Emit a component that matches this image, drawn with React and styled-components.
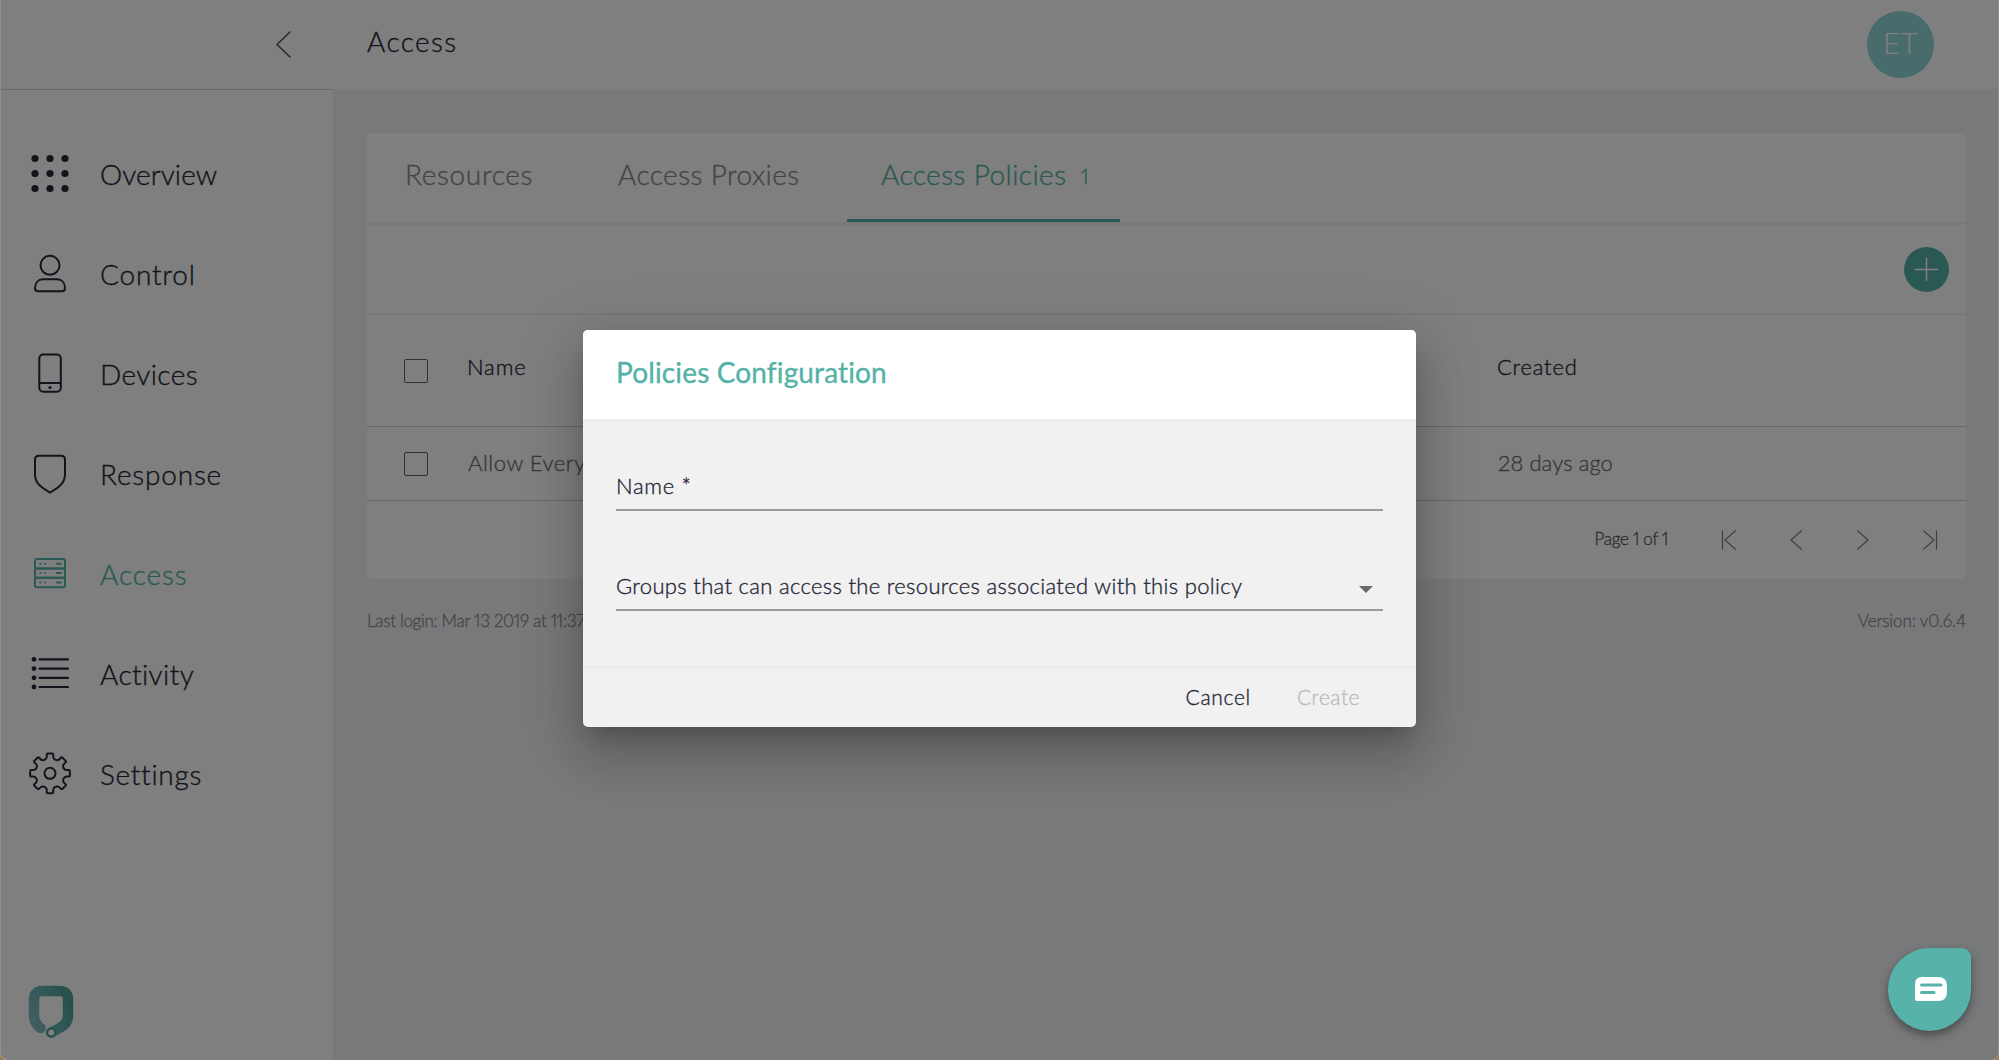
import React from "react";
import styled, { createGlobalStyle } from "styled-components";

const TEAL = "#54b2a6";
const INK = "#262837";

const Global = createGlobalStyle`
  * { box-sizing: border-box; }
  html, body { margin: 0; background: #fff; }
  body { font-family: Lato, "Open Sans", sans-serif; font-weight: 300; color: ${INK}; overflow: hidden; }
`;

const T = styled.span`
  display: block;
  white-space: nowrap;
  font-size: ${(p) => p.$size}px;
  line-height: ${(p) => p.$size + 6}px;
  letter-spacing: ${(p) => p.$ls || 0}px;
  font-weight: ${(p) => p.$weight || 300};
  font-variant-numeric: proportional-nums;
  font-variant-ligatures: none;
  -webkit-text-stroke: ${(p) => p.$stroke ?? 0.35}px currentColor;
  color: ${(p) => p.$color || INK};
`;

const Desktop = styled.div`
  width: 1999px;
  height: 1061px;
  background: #fff;
`;
const Wallpaper = styled.div`
  position: relative;
  height: 1060px;
  background: #9a7b52;
`;
const Page = styled.div`
  display: grid;
  grid-template-columns: 332px 1fr;
  height: 1060px;
  background: #f0f2f5;
  border-left: 1px solid #fff;
  border-right: 1px solid #fff;
  border-radius: 0 0 8px 8px;
  overflow: hidden;
`;
const Sidebar = styled.aside`
  display: flex;
  flex-direction: column;
  background: #fff;
`;
const SidebarTop = styled.div`
  display: flex;
  align-items: center;
  justify-content: flex-end;
  height: 90px;
  padding-right: 42px;
  border-bottom: 1px solid #d4d4d4;
`;
const Nav = styled.nav`
  display: flex;
  flex-direction: column;
  padding-top: 34px;
  flex: 1;
`;
const NavItem = styled.a`
  display: grid;
  grid-template-columns: 46px 1fr;
  align-items: center;
  column-gap: 27px;
  height: 100px;
  padding-left: 26px;
  color: ${(p) => (p.$active ? TEAL : INK)};
`;
const NavText = styled(T)`
  padding-bottom: 1px;
`;
const LogoBox = styled.div`
  padding: 1px 0 19px 26px;
  height: 77px;
`;

const Main = styled.main`
  display: flex;
  flex-direction: column;
`;
const Header = styled.header`
  display: flex;
  justify-content: space-between;
  align-items: center;
  height: 89px;
  padding: 0 64px 0 34px;
  background: #fff;
`;
const HeaderTitle = styled(T)`
  padding-bottom: 8px;
`;
const Avatar = styled.div`
  display: flex;
  align-items: center;
  justify-content: center;
  width: 67px;
  height: 67px;
  padding-bottom: 5px;
  border-radius: 50%;
  background: #90d6d8;
`;
const Content = styled.div`
  padding: 44px 32px 0 34px;
`;
const Card = styled.section`
  background: #fff;
  border-radius: 0 0 6px 6px;
  height: 446px;
`;
const Tabs = styled.div`
  display: flex;
  height: 92px;
  border-bottom: 3px solid #f0f2f5;
`;
const Tab = styled.div`
  display: flex;
  align-items: flex-start;
  gap: 14px;
  width: ${(p) => p.$w}px;
  height: 89px;
  padding: 24px 0 0 ${(p) => p.$pad}px;
  border-bottom: 3px solid ${(p) => (p.$active ? TEAL : "transparent")};
`;
const TabCount = styled(T)`
  padding-top: 5px;
`;
const ActionBar = styled.div`
  display: flex;
  align-items: center;
  justify-content: flex-end;
  height: 90px;
  padding-right: 17px;
  border-bottom: 2px solid #f0f2f5;
`;
const AddButton = styled.div`
  display: flex;
  width: 45px;
  height: 45px;
  border-radius: 50%;
  background: ${TEAL};
`;
const Row = styled.div`
  display: grid;
  grid-template-columns: 63px 1030px 1fr;
  align-items: center;
  height: ${(p) => p.$h}px;
  padding-left: 37px;
  border-bottom: 1px solid #cfcfcf;
`;
const Checkbox = styled.span`
  width: 24px;
  height: 24px;
  border: 1.5px solid #606060;
  border-radius: 2px;
`;
const HeadText = styled(T)`
  padding-bottom: 8px;
`;
const CellText = styled(T)`
  padding: 0 0 2px 1px;
`;
const Pager = styled.div`
  display: flex;
  align-items: center;
  justify-content: flex-end;
  height: 77px;
  padding-right: 27px;
  gap: 46.5px;
`;
const PageText = styled(T)`
  margin-right: 5px;
  padding-bottom: 3px;
`;
const Footer = styled.footer`
  display: flex;
  justify-content: space-between;
  padding-top: 30px;
`;
const Overlay = styled.div`
  position: absolute;
  inset: 0;
  background: rgba(0, 0, 0, 0.5);
  border-radius: 0 0 8px 8px;
  box-shadow: inset 1px 0 rgba(255, 255, 255, 0.1), inset -1px 0 rgba(255, 255, 255, 0.1);
  display: flex;
  justify-content: center;
  align-items: flex-start;
  padding-top: 330px;
`;
const Dialog = styled.div`
  width: 833px;
  height: 397px;
  border-radius: 5px;
  overflow: hidden;
  background: #f1f1f1;
  box-shadow: 0 14px 19px -9px rgba(0,0,0,.2), 0 30px 48px 4px rgba(0,0,0,.14), 0 11px 58px 10px rgba(0,0,0,.12);
`;
const DialogHead = styled.div`
  height: 92px;
  padding: 25px 33px 0;
  background: #fff;
  border-bottom: 3px solid #ebebeb;
`;
const DialogBody = styled.div`
  display: flex;
  flex-direction: column;
  gap: 52px;
  height: 244px;
  padding: 41px 33px 0;
`;
const Field = styled.div`
  display: flex;
  justify-content: space-between;
  align-items: flex-start;
  height: 48px;
  padding: 9px 10px 0 0;
  border-bottom: 2px solid #9a9a9a;
`;
const Caret = styled.span`
  margin-top: 14px;
  border: 7px solid transparent;
  border-top-color: #6a6a6a;
  border-bottom: 0;
`;
const DialogFoot = styled.div`
  display: flex;
  justify-content: flex-end;
  gap: 46px;
  height: 61px;
  padding: 14px 56px 0 0;
  border-top: 3px solid #ebebeb;
`;
const Chat = styled.div`
  position: absolute;
  right: 28px;
  top: 948px;
  width: 83px;
  height: 83px;
  display: flex;
  align-items: center;
  justify-content: center;
  padding: 0 0 2px 2px;
  border-radius: 50% 9px 50% 50%;
  background: #57b2a9;
  box-shadow: 0 4px 8px rgba(0, 0, 0, 0.4);
`;

const Svg = ({ w, h, sw = 2, children }) => (
  <svg width={w} height={h} viewBox={`0 0 ${w} ${h}`} fill="none" stroke="currentColor" strokeWidth={sw} strokeLinecap="round" strokeLinejoin="round">
    {children}
  </svg>
);

const GridIcon = () => (
  <Svg w={46} h={46}>
    {[7.5, 22.5, 37.5].flatMap((y) => [8, 23, 38].map((x) => <circle key={x + "-" + y} cx={x} cy={y} r="3.6" fill="currentColor" stroke="none" />))}
  </Svg>
);
const UserIcon = () => (
  <Svg w={46} h={46}>
    <circle cx="23" cy="14.3" r="9.5" />
    <path d="M16 28.300H30C35 28.300 38 32 38 37.300Q38 40.300 35 40.300H11Q8 40.300 8 37.300C8 32 11 28.300 16 28.300Z" />
  </Svg>
);
const PhoneIcon = () => (
  <Svg w={46} h={46}>
    <rect x="12.3" y="3.5" width="21.5" height="37.3" rx="4" />
    <path d="M12.3 32H33.8" />
    <circle cx="23" cy="36.5" r="1.6" fill="currentColor" stroke="none" />
  </Svg>
);
const ShieldIcon = () => (
  <Svg w={46} h={46}>
    <path d="M12 4.800H34Q38 4.800 38 8.800V23C38 32 33 35.500 23 41.700C13 35.500 8 32 8 23V8.800Q8 4.800 12 4.800Z" />
  </Svg>
);
const ServerIcon = () => (
  <Svg w={46} h={46}>
    {[8, 17.4, 26.8].map((y) => (
      <g key={y}>
        <rect x="8" y={y} width="30" height="9.4" rx="2" />
        <path d={`M13.3 ${y + 4.7}h.1M18 ${y + 4.7}h.1M29.5 ${y + 4.7}h4.5`} />
      </g>
    ))}
  </Svg>
);
const ListIcon = () => (
  <Svg w={46} h={46} sw={2.2}>
    {[8.3, 17.6, 26.8, 36].map((y) => (
      <g key={y}>
        <circle cx="7" cy={y} r="2.4" fill="currentColor" stroke="none" />
        <path d={`M12.5 ${y}H41`} />
      </g>
    ))}
  </Svg>
);
const gearPath = (() => {
  const pts = [];
  const n = 8;
  for (let i = 0; i < n; i++) {
    const a = (i * 2 * Math.PI) / n - Math.PI / 2;
    const at = (r, d) => {
      const t = a + (d * Math.PI) / 180;
      return `${(23 + r * Math.cos(t)).toFixed(2)} ${(22.3 + r * Math.sin(t)).toFixed(2)}`;
    };
    pts.push(`${i ? "L" : "M"}${at(15.5, -14)}Q${at(16, -11)} ${at(19, -10)}Q${at(20, -9.5)} ${at(20, -7)}L${at(20, 7)}Q${at(20, 9.5)} ${at(19, 10)}Q${at(16, 11)} ${at(15.5, 14)}Q${at(13.6, 22.5)} ${at(15.5, 31)}`);
  }
  return pts.join("") + "Z";
})();
const GearIcon = () => (
  <Svg w={46} h={46}>
    <path d={gearPath} />
    <circle cx="23" cy="22.3" r="5.5" />
  </Svg>
);

const NAV = [
  ["Overview", GridIcon, 0.1],
  ["Control", UserIcon, 0.8],
  ["Devices", PhoneIcon, 0.4],
  ["Response", ShieldIcon, 0.8],
  ["Access", ServerIcon, 0.9],
  ["Activity", ListIcon, 0.4],
  ["Settings", GearIcon, 0.7],
];

const Logo = () => (
  <svg width="50" height="56" viewBox="0 0 50 56" fill="none">
    <defs>
      <linearGradient id="logo" x1="0" y1="40" x2="46" y2="20" gradientUnits="userSpaceOnUse">
        <stop offset="0" stopColor="#8dbcc9" />
        <stop offset="0.6" stopColor="#5fb3ac" />
        <stop offset="1" stopColor="#4f9f96" />
      </linearGradient>
    </defs>
    <path d="M14 44.500C9 41 7.500 37 7.500 32V16Q7.500 7.500 16 7.500H33Q41.500 7.500 41.500 16V32C41.500 40 37 43 24.500 49" transform="translate(-.5 -.5)" stroke="url(#logo)" strokeWidth="10.500" strokeLinecap="round" />
    <circle cx="24.300" cy="48.600" r="4" stroke="#4f9f96" strokeWidth="2" fill="#fff" />
  </svg>
);

const Chevron = ({ right, bar }) => (
  <Svg w={20} h={20} sw={1.2}>
    <g transform={right ? "translate(20 0) scale(-1 1)" : undefined} stroke="#808080">
      <path d="M15.500 .8L5 10L15.500 19.200" />
      {bar && <path d="M2.500 .8V19.200" />}
    </g>
  </Svg>
);

export default function App() {
  return (
    <Desktop>
      <Global />
      <Wallpaper>
        <Page>
          <Sidebar>
            <SidebarTop>
              <Svg w={15} h={27} sw={1.5}>
                <path d="M14 1L1 13.500L14 26" stroke="#505050" />
              </Svg>
            </SidebarTop>
            <Nav>
              {NAV.map(([label, Icon, ls]) => (
                <NavItem key={label} $active={label === "Access"}>
                  <Icon />
                  <NavText $size={28} $ls={ls} $color={label === "Access" ? TEAL : INK}>{label}</NavText>
                </NavItem>
              ))}
            </Nav>
            <LogoBox><Logo /></LogoBox>
          </Sidebar>
          <Main>
            <Header>
              <HeaderTitle $size={28} $ls={1.4}>Access</HeaderTitle>
              <Avatar><T $size={30} $color="#fff" $stroke={0}>ET</T></Avatar>
            </Header>
            <Content>
              <Card>
                <Tabs>
                  <Tab $w={213} $pad={38}><T $size={28} $ls={0.65} $color="#8a8a8a">Resources</T></Tab>
                  <Tab $w={267} $pad={38}><T $size={28} $ls={0.42} $color="#8a8a8a">Access Proxies</T></Tab>
                  <Tab $w={273} $pad={34} $active>
                    <T $size={28} $ls={0.42} $color={TEAL}>Access Policies</T>
                    <TabCount $size={22} $color={TEAL}>1</TabCount>
                  </Tab>
                </Tabs>
                <ActionBar>
                  <AddButton>
                    <Svg w={45} h={45} sw={1.5}>
                      <path d="M11.500 22.500H33.500M22.500 11.500V33.500" stroke="#fff" />
                    </Svg>
                  </AddButton>
                </ActionBar>
                <Row $h={112}>
                  <Checkbox />
                  <HeadText $size={22} $ls={0.9}>Name</HeadText>
                  <HeadText $size={22} $ls={0.8}>Created</HeadText>
                </Row>
                <Row $h={74}>
                  <Checkbox />
                  <CellText $size={22} $ls={0.55} $color="#707070">Allow Everyone</CellText>
                  <CellText $size={22} $ls={0.1} $color="#707070">28 days ago</CellText>
                </Row>
                <Pager>
                  <PageText $size={17} $ls={-0.3} $color="#606060">Page 1 of 1</PageText>
                  <Chevron bar />
                  <Chevron />
                  <Chevron right />
                  <Chevron bar right />
                </Pager>
              </Card>
              <Footer>
                <T $size={17} $ls={-0.3} $color="#909090">Last login: Mar 13 2019 at 11:37</T>
                <T $size={17} $ls={-0.1} $color="#909090">Version: v0.6.4</T>
              </Footer>
            </Content>
          </Main>
        </Page>
        <Overlay>
          <Dialog>
            <DialogHead><T $size={28} $ls={0.14} $color={TEAL} $weight={400}>Policies Configuration</T></DialogHead>
            <DialogBody>
              <Field><T $size={22} $ls={0.7}>Name *</T></Field>
              <Field>
                <T $size={22} $ls={0.33}>Groups that can access the resources associated with this policy</T>
                <Caret />
              </Field>
            </DialogBody>
            <DialogFoot>
              <T $size={21} $ls={0.7}>Cancel</T>
              <T $size={21} $ls={0.5} $color="#bbb">Create</T>
            </DialogFoot>
          </Dialog>
        </Overlay>
        <Chat>
          <svg width="34" height="26" viewBox="0 0 34 26" fill="none">
            <path d="M8 1H24Q33 1 33 10V16Q33 25 24 25H3Q1 25 1 23V8Q1 1 8 1Z" fill="#fff" />
            <path d="M7.500 9H27M7.500 16.500H20" stroke="#57b2a9" strokeWidth="3" strokeLinecap="round" />
          </svg>
        </Chat>
      </Wallpaper>
    </Desktop>
  );
}
